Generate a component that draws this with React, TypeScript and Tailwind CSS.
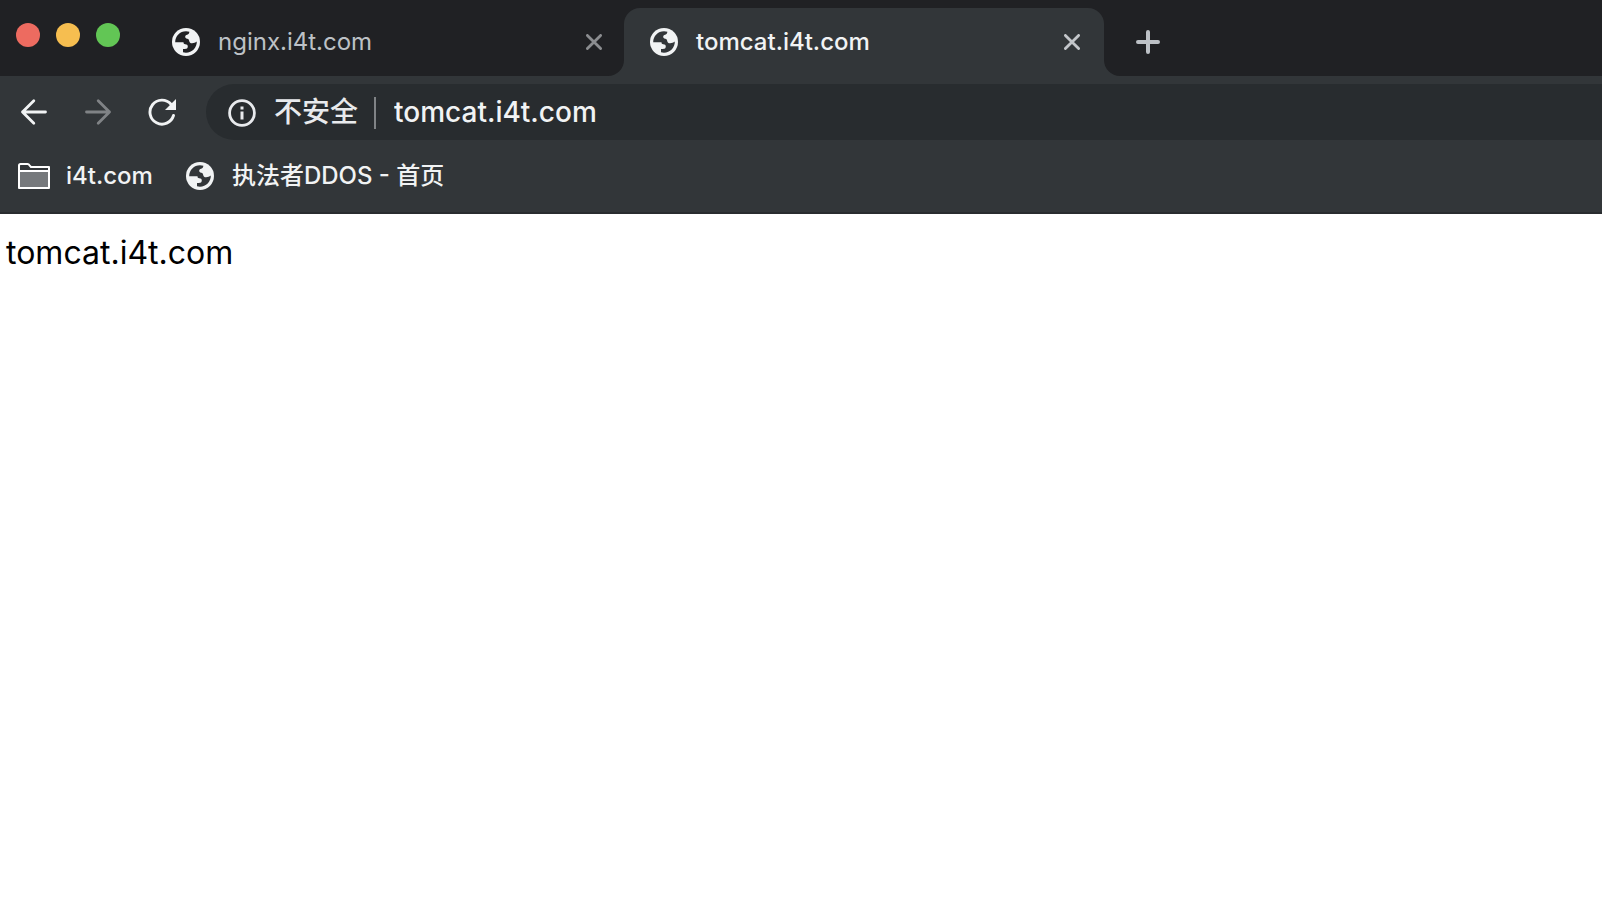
import React from 'react';

interface IconProps {
  className?: string;
}

function GlobeIcon({ className = '' }: IconProps) {
  return (
    <svg viewBox="0 0 28 28" className={`w-7 h-7 shrink-0 ${className}`} aria-hidden="true">
      <circle cx="14" cy="14" r="14" fill="#f1f3f4" />
      <path
        fill="currentColor"
        d="M3.200 14.200C3.200 8 8 3.200 14 3.200c1.200 0 2.400.2 3.400.5-.2 1.600-.8 2.600-2.200 3-1.400.3-2 .9-2 2.100 0 1.300.7 1.700 2 1.900 1.500.2 1.800 1 2 2.200.3 1.600 1.200 2.300 2.900 2.300 1.900 0 3.200-.6 4.700-1.600.2 6.200-4.800 11.200-10.800 11.200-1.200 0-2.200-.2-3-.5v-3.300h1.800c2 0 3-.8 3-2.500 0-1.500-.9-2.200-2.600-2.300-1.200-.1-1.600-.6-1.700-2z"
      />
    </svg>
  );
}

function CloseIcon() {
  return (
    <svg viewBox="0 0 16 16" className="w-4 h-4" fill="none" stroke="currentColor" strokeWidth="2.8" strokeLinecap="round" aria-hidden="true">
      <path d="M1.4 1.4l13.2 13.2M14.6 1.4L1.4 14.6" />
    </svg>
  );
}

function ArrowIcon({ className = '' }: IconProps) {
  return (
    <svg viewBox="0 0 28 28" className={`w-7 h-7 ${className}`} fill="none" stroke="currentColor" strokeWidth="2.8" strokeLinecap="round" strokeLinejoin="round" aria-hidden="true">
      <path d="M25.500 14H2.500M13.800 2.700L2.500 14l11.300 11.300" />
    </svg>
  );
}

function ReloadIcon() {
  return (
    <svg viewBox="0 0 28 28" className="w-7 h-7" aria-hidden="true">
      <path d="M25.5 17.5A12 12 0 1 1 23 6.200" fill="none" stroke="currentColor" strokeWidth="2.9" strokeLinecap="round" />
      <path d="M28 1v11H17z" fill="currentColor" />
    </svg>
  );
}

function InfoIcon() {
  return (
    <svg viewBox="0 0 28 28" className="w-7 h-7 shrink-0" aria-hidden="true">
      <circle cx="14" cy="14" r="12.4" fill="none" stroke="currentColor" strokeWidth="2.8" />
      <path d="M12.500 7.500h3v3h-3zM12.500 12.500h3v8h-3z" fill="currentColor" />
    </svg>
  );
}

function FolderIcon() {
  return (
    <svg viewBox="0 0 32 26" className="w-8 h-[26px] shrink-0" fill="none" stroke="#fff" strokeWidth="2" strokeLinejoin="round" aria-hidden="true">
      <path d="M1 8h30v17H1z" fill="#76797c" />
      <path d="M1 8V2.500Q1 1 2.500 1h7q1.300 0 2 1.300L13 4h18v4" />
    </svg>
  );
}

const windowControls = [
  { label: 'Close', color: 'bg-[#ed6b60]' },
  { label: 'Minimize', color: 'bg-[#f6be50]' },
  { label: 'Zoom', color: 'bg-[#62c655]' },
];

function TabStrip() {
  return (
    <div className="flex h-[76px] bg-[#202124] pt-2 pl-4">
      <div className="flex gap-4 pt-[15px]">
        {windowControls.map((control) => (
          <button key={control.label} aria-label={control.label} className={`w-6 h-6 rounded-full ${control.color}`} />
        ))}
      </div>

      <div className="flex items-center w-[504px] pl-[52px] pr-[22px] font-normal text-[#bdc1c6]">
        <button className="flex items-center gap-[18px] flex-1">
          <GlobeIcon className="text-[#202124]" />
          <span>nginx.i4t.com</span>
        </button>
        <button aria-label="Close tab" className="text-[#8b8d90]">
          <CloseIcon />
        </button>
      </div>

      {/* Active tab */}
      <div className="relative flex items-center w-[480px] rounded-t-2xl bg-[#323639] px-6 pl-[26px] text-[#f1f3f4]">
        <svg viewBox="0 0 16 16" className="absolute bottom-0 -left-4 w-4 h-4" aria-hidden="true">
          <path d="M16 0v16H0A16 16 0 0 0 16 0z" fill="#323639" />
        </svg>
        <svg viewBox="0 0 16 16" className="absolute bottom-0 -right-4 w-4 h-4" aria-hidden="true">
          <path d="M0 0v16h16A16 16 0 0 1 0 0z" fill="#323639" />
        </svg>
        <button className="flex items-center gap-[18px] flex-1">
          <GlobeIcon className="text-[#323639]" />
          <span>tomcat.i4t.com</span>
        </button>
        <button aria-label="Close tab" className="text-[#c3c6ca]">
          <CloseIcon />
        </button>
      </div>

      <button aria-label="New tab" className="ml-8 text-[#bdc1c6]">
        <svg viewBox="0 0 24 24" className="w-6 h-6" fill="none" stroke="currentColor" strokeWidth="4" strokeLinecap="round" aria-hidden="true">
          <path d="M12 2v20M2 12h20" />
        </svg>
      </button>
    </div>
  );
}

function Toolbar() {
  return (
    <div className="flex items-center pt-2 pl-5 text-[#f1f3f4]">
      <div className="flex gap-9 w-[186px] shrink-0">
        <button aria-label="Back">
          <ArrowIcon />
        </button>
        <button aria-label="Forward" className="text-[#808386]" disabled>
          <ArrowIcon className="rotate-180" />
        </button>
        <button aria-label="Reload">
          <ReloadIcon />
        </button>
      </div>
      <div className="flex items-center flex-1 h-14 pt-0.5 pl-[22px] rounded-l-full bg-[#282c2f] text-[28px]">
        <button className="flex items-center gap-[18px] text-[#e8eaed]">
          <InfoIcon />
          <span>不安全</span>
        </button>
        <div className="w-0.5 h-8 mx-4 bg-[#808386]" />
        <input aria-label="Address" defaultValue="tomcat.i4t.com" className="flex-1 min-w-0 pl-0.5 bg-transparent outline-none" />
      </div>
    </div>
  );
}

function BookmarksBar() {
  return (
    <nav className="flex items-center gap-[33px] h-[74px] pl-[18px] border-b-2 border-[#292c2f] text-[#f1f3f4]">
      <button className="flex items-center gap-4">
        <FolderIcon />
        <span>i4t.com</span>
      </button>
      <a href="#" className="flex items-center gap-[18px]">
        <GlobeIcon className="text-[#323639]" />
        <span>执法者DDOS - 首页</span>
      </a>
    </nav>
  );
}

export default function App() {
  return (
    <div className="min-h-screen bg-white font-[Inter,'Noto_Sans_CJK_SC',sans-serif]">
      <header className="bg-[#323639] text-2xl font-medium whitespace-nowrap">
        <TabStrip />
        <Toolbar />
        <BookmarksBar />
      </header>
      <main className="px-1.5 pt-4 text-[32px] leading-[46px] text-black">tomcat.i4t.com</main>
    </div>
  );
}
